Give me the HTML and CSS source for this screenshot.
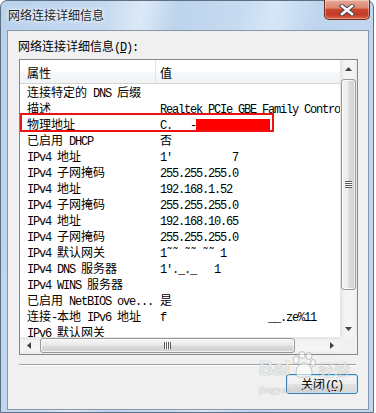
FILE: index.html
```html
<!DOCTYPE html>
<html lang="zh-CN">
<head>
  <meta charset="UTF-8">
  <title>网络连接详细信息</title>
  <meta name="viewport" content="width=device-width, initial-scale=1.0">
  <link rel="stylesheet" href="styles.css">
</head>
<body>

<div class="window">

  <!-- Title bar -->
  <div class="titlebar">
    <span class="title">网络连接详细信息</span>
    <button class="close-x" aria-label="关闭">
      <svg width="16" height="12" viewBox="0 0 16 12">
        <path d="M3 2 L13 10 M13 2 L3 10" stroke="#4a4a4a" stroke-width="4.4" stroke-linecap="square"/>
        <path d="M3 2 L13 10 M13 2 L3 10" stroke="#ffffff" stroke-width="2.4" stroke-linecap="square"/>
      </svg>
    </button>
  </div>

  <!-- Dialog body -->
  <div class="client">
    <div class="label">网络连接详细信息<span class="m">(<u>D</u>):</span></div>

    <div class="listbox">
      <div class="list-main">
        <div class="header">
          <div class="col-prop">属性</div>
          <div class="col-val">值</div>
        </div>

        <div class="row"><div class="prop">连接特定的<span class="m"> DNS </span>后缀</div><div class="val"></div></div>
        <div class="row"><div class="prop">描述</div><div class="val"><span class="m">Realtek PCIe GBE Family Controller</span></div></div>
        <div class="row"><div class="prop">物理地址</div><div class="val"><span class="m">C._ _-<span class="redact"></span></span></div></div>
        <div class="row"><div class="prop">已启用<span class="m"> DHCP</span></div><div class="val">否</div></div>
        <div class="row"><div class="prop"><span class="m">IPv4 </span>地址</div><div class="val"><span class="m">1'          7</span></div></div>
        <div class="row"><div class="prop"><span class="m">IPv4 </span>子网掩码</div><div class="val"><span class="m">255.255.255.0</span></div></div>
        <div class="row"><div class="prop"><span class="m">IPv4 </span>地址</div><div class="val"><span class="m">192.168.1.52</span></div></div>
        <div class="row"><div class="prop"><span class="m">IPv4 </span>子网掩码</div><div class="val"><span class="m">255.255.255.0</span></div></div>
        <div class="row"><div class="prop"><span class="m">IPv4 </span>地址</div><div class="val"><span class="m">192.168.10.65</span></div></div>
        <div class="row"><div class="prop"><span class="m">IPv4 </span>子网掩码</div><div class="val"><span class="m">255.255.255.0</span></div></div>
        <div class="row"><div class="prop"><span class="m">IPv4 </span>默认网关</div><div class="val"><span class="m">1˜˜ ˜˜ ˜˜ 1</span></div></div>
        <div class="row"><div class="prop"><span class="m">IPv4 DNS </span>服务器</div><div class="val"><span class="m">1'._._   1</span></div></div>
        <div class="row"><div class="prop"><span class="m">IPv4 WINS </span>服务器</div><div class="val"></div></div>
        <div class="row"><div class="prop">已启用<span class="m"> NetBIOS ove...</span></div><div class="val">是</div></div>
        <div class="row"><div class="prop">连接<span class="m">-</span>本地<span class="m"> IPv6 </span>地址</div><div class="val"><span class="m">f                 __.ze%11</span></div></div>
        <div class="row"><div class="prop"><span class="m">IPv6 </span>默认网关</div><div class="val"></div></div>

        <div class="highlight"></div>
      </div>

      <div class="vscroll">
        <div class="arrow">
          <svg width="7" height="4" viewBox="0 0 7 4"><path d="M0 4 L3.5 0 L7 4 Z" fill="#444"/></svg>
        </div>
        <div class="vthumb"><div class="grip-h"></div></div>
        <div class="spacer"></div>
        <div class="arrow">
          <svg width="7" height="4" viewBox="0 0 7 4"><path d="M0 0 L3.5 4 L7 0 Z" fill="#444"/></svg>
        </div>
      </div>

      <div class="hscroll">
        <div class="arrow">
          <svg width="4" height="7" viewBox="0 0 4 7"><path d="M4 0 L0 3.5 L4 7 Z" fill="#444"/></svg>
        </div>
        <div class="hthumb"><div class="grip-v"></div></div>
        <div class="spacer"></div>
        <div class="arrow">
          <svg width="4" height="7" viewBox="0 0 4 7"><path d="M0 0 L4 3.5 L0 7 Z" fill="#444"/></svg>
        </div>
      </div>

      <div class="corner"></div>
    </div>

    <div class="separator"></div>

    <div class="buttons">
      <button class="button">关闭<span class="m">(<u>C</u>)</span></button>
    </div>
  </div>

  <!-- faint site watermark -->
  <div class="watermark">
    <div class="wm-top">
      <span class="wm-bai">Bai</span>
      <svg width="26" height="30" viewBox="0 0 26 30">
        <g fill="rgba(255,255,255,0.6)" stroke="rgba(150,150,150,0.55)" stroke-width="1">
          <ellipse cx="6" cy="9" rx="3" ry="4"/>
          <ellipse cx="12" cy="4" rx="3" ry="3.5"/>
          <ellipse cx="19" cy="5" rx="3" ry="3.5"/>
          <ellipse cx="23" cy="12" rx="2.5" ry="3.5"/>
          <path d="M6 22 C6 15 11 12 14 12 C18 12 22 16 22 22 C22 27 17 26 14 26 C10 26 6 27 6 22 Z"/>
        </g>
      </svg>
      <span class="wm-jy">经验</span>
    </div>
    <div class="wm-url">jingyan.baidu.com</div>
  </div>
</div>

</body>
</html>
```

FILE: styles.css
```css
body {
  margin: 0;
  background-color: #ffffff;
  font-family: "Noto Sans CJK SC", sans-serif;
  font-size: 12px;
  color: #000;
}

/* latin runs: narrow monospace like the old bitmap font */
.m {
  font-family: "Liberation Mono", monospace;
  letter-spacing: -1.2px;
}

.window {
  position: relative;
  width: 374px;
  height: 413px;
  box-sizing: border-box;
  border: 1px solid #5f6f82;
  border-radius: 7px 7px 0 0;
  background: linear-gradient(100deg, #b8d1ec 0%, #c4daf1 24%, #dde9f7 32%, #bcd4ed 40%, #c6dbf1 54%, #d6e6f6 62%, #bed5ee 72%, #c2d8ef 100%);
  display: flex;
  flex-direction: column;
}

.titlebar {
  height: 29px;
  display: flex;
  justify-content: space-between;
  align-items: flex-start;
  flex: none;
}

.title {
  padding: 6px 0 0 7px;
  line-height: 16px;
  color: #1e1e1e;
  text-shadow: 0 0 6px #ffffff, 0 0 3px #ffffff;
}

.close-x {
  width: 46px;
  height: 20px;
  margin: -1px 3px 0 0;
  padding: 0;
  border: 1px solid #6e2a20;
  border-top: none;
  border-radius: 0 0 5px 5px;
  background: linear-gradient(#e9a898 0%, #dd8572 42%, #c9482f 50%, #c23c26 78%, #e0654a 100%);
  box-shadow: inset 0 0 0 1px rgba(255, 255, 255, 0.35);
  display: flex;
  align-items: center;
  justify-content: center;
}

.client {
  margin-left: 6px;
  width: 362px;
  height: 380px;
  box-sizing: border-box;
  border: 1px solid #8797a9;
  background-color: #f0f0f0;
  display: flex;
  flex-direction: column;
}

.label {
  margin: 7px 0 0 10px;
  line-height: 16px;
}

.listbox {
  margin: 3px 0 0 11px;
  width: 339px;
  height: 296px;
  box-sizing: border-box;
  border: 1px solid #828790;
  background-color: #ffffff;
  display: grid;
  grid-template-columns: 1fr 17px;
  grid-template-rows: 1fr 17px;
}

.list-main {
  position: relative;
  overflow: hidden;
}

.header {
  display: grid;
  grid-template-columns: 136px 1fr;
  height: 23px;
  border-bottom: 1px solid #d5d5d5;
  background: linear-gradient(#ffffff 0%, #ffffff 50%, #f7f8fa 50%, #f1f2f4 100%);
}

.header div {
  padding-top: 2px;
  line-height: 21px;
}

.col-prop {
  box-sizing: border-box;
  padding-left: 7px;
  border-right: 1px solid #e3e4e6;
}

.col-val {
  padding-left: 4px;
}

.row {
  display: grid;
  grid-template-columns: 136px 1fr;
  height: 16px;
  line-height: 16px;
  white-space: pre;
}

.prop {
  padding-left: 7px;
  overflow: hidden;
}

.val {
  padding-left: 4px;
}

.redact {
  display: inline-block;
  width: 74px;
  height: 11px;
  background-color: #ff0000;
  vertical-align: -1px;
}

.highlight {
  position: absolute;
  left: 0;
  top: 53px;
  width: 254px;
  height: 19px;
  box-sizing: border-box;
  border: 2px solid #ee1111;
}

/* scroll bars */
.vscroll {
  display: flex;
  flex-direction: column;
  background: linear-gradient(to right, #e4e4e4, #f3f3f3 25%, #f5f5f5 75%, #ebebeb);
}

.hscroll {
  display: flex;
  background: linear-gradient(#e4e4e4, #f3f3f3 25%, #f5f5f5 75%, #ebebeb);
}

.arrow {
  width: 17px;
  height: 17px;
  flex: none;
  display: flex;
  align-items: center;
  justify-content: center;
}

.spacer {
  flex: 1;
}

.vthumb {
  margin: 2px 1px 0 1px;
  height: 211px;
  box-sizing: border-box;
  border: 1px solid #999999;
  border-radius: 3px;
  background: linear-gradient(to right, #f5f5f5, #ebebeb 45%, #dbdbdb 55%, #d0d0d0);
  box-shadow: inset 0 0 0 1px rgba(255, 255, 255, 0.7);
  display: flex;
  align-items: center;
  justify-content: center;
}

.hthumb {
  margin: 1px 0 1px 3px;
  width: 255px;
  box-sizing: border-box;
  border: 1px solid #999999;
  border-radius: 3px;
  background: linear-gradient(#f5f5f5, #ebebeb 45%, #dbdbdb 55%, #d0d0d0);
  box-shadow: inset 0 0 0 1px rgba(255, 255, 255, 0.7);
  display: flex;
  align-items: center;
  justify-content: center;
}

.grip-h {
  width: 7px;
  height: 7px;
  background: repeating-linear-gradient(#5a5a5a 0 1px, #ffffff 1px 2px);
}

.grip-v {
  width: 7px;
  height: 7px;
  background: repeating-linear-gradient(to right, #5a5a5a 0 1px, #ffffff 1px 2px);
}

.corner {
  background-color: #f0f0f0;
}

.separator {
  margin: 9px 0 0 11px;
  width: 337px;
  border-top: 1px solid #a0a0a0;
  border-bottom: 1px solid #ffffff;
}

.buttons {
  display: flex;
  justify-content: flex-end;
  margin-top: 8px;
  padding-right: 10px;
}

.button {
  width: 72px;
  height: 20px;
  box-sizing: border-box;
  padding: 0;
  border: 1px solid #3c7fb1;
  border-radius: 3px;
  background: linear-gradient(#f6f6f6 0%, #eeeeee 50%, #e2e2e2 50%, #d8d8d8 100%);
  box-shadow: inset 0 0 0 1px #bfe9fa;
  font-family: "Noto Sans CJK SC", sans-serif;
  font-size: 12px;
  line-height: 18px;
  color: #000;
}

.watermark {
  position: absolute;
  left: 258px;
  top: 350px;
  color: rgba(255, 255, 255, 0.8);
  text-shadow: 0 0 1px rgba(0, 0, 0, 0.4);
  pointer-events: none;
}

.wm-top {
  display: flex;
  align-items: flex-end;
}

.wm-bai {
  font-family: "Liberation Sans", sans-serif;
  font-weight: bold;
  font-size: 20px;
  line-height: 22px;
  margin-bottom: 2px;
}

.wm-jy {
  font-size: 16px;
  line-height: 20px;
  margin: 0 0 2px 2px;
}

.wm-url {
  font-family: "Liberation Serif", serif;
  font-size: 11px;
  line-height: 12px;
  margin-top: 2px;
}
```
